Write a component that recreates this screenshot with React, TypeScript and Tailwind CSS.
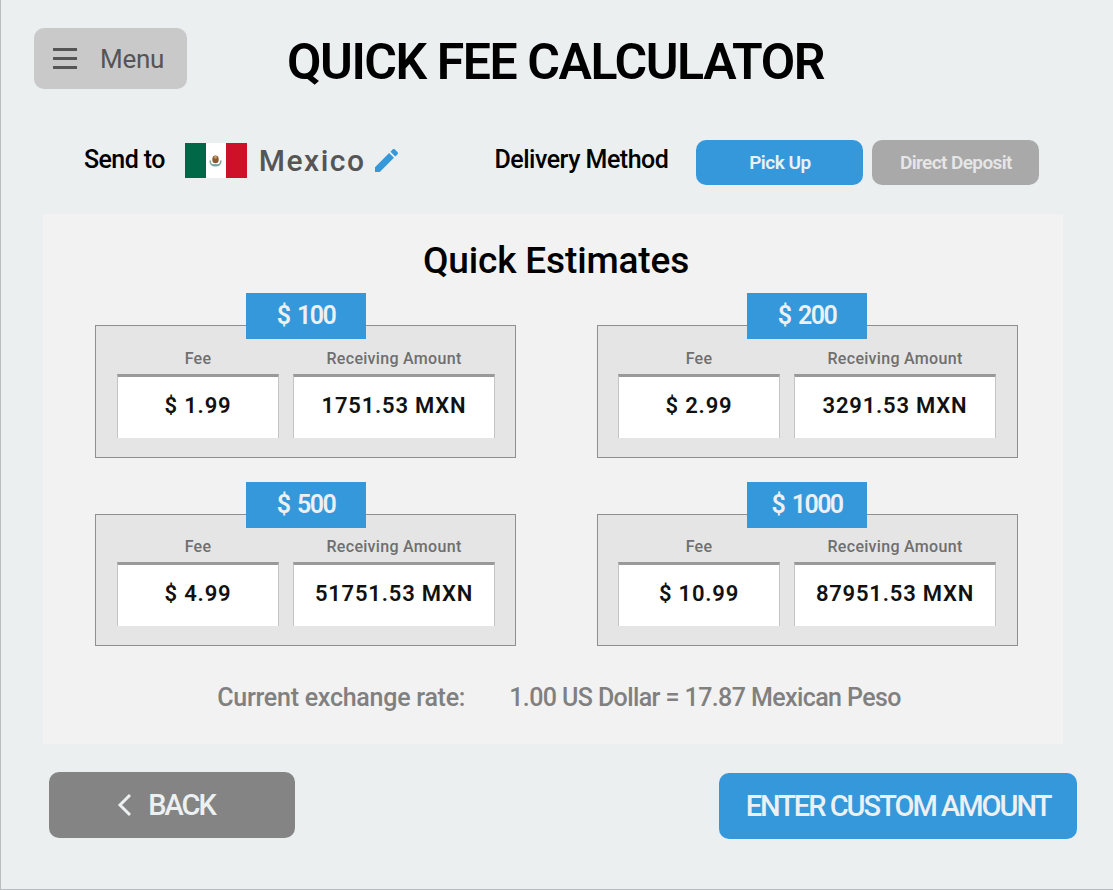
import React from 'react';

const estimates = [
  { amount: '$ 100', fee: '$ 1.99', receiving: '1751.53 MXN' },
  { amount: '$ 200', fee: '$ 2.99', receiving: '3291.53 MXN' },
  { amount: '$ 500', fee: '$ 4.99', receiving: '51751.53 MXN' },
  { amount: '$ 1000', fee: '$ 10.99', receiving: '87951.53 MXN' },
];

function MexicoFlag() {
  return (
    <div className="flex h-[35px] w-[62px] shrink-0">
      <div className="w-[21px] bg-[#006847]" />
      <div className="flex w-[20px] items-center justify-center bg-white">
        <svg width="15" height="15" viewBox="0 0 14 14">
          <path d="M2 7c0 3 2 5 5 5s5-2 5-5" fill="none" stroke="#7fa88f" strokeWidth="1.4" />
          <ellipse cx="7" cy="6" rx="3" ry="3.6" fill="#8a5a35" />
          <circle cx="7" cy="4" r="1.3" fill="#c9a15f" />
          <path d="M4 11h6" stroke="#6fa3b5" strokeWidth="1.2" />
        </svg>
      </div>
      <div className="w-[21px] bg-[#ce1126]" />
    </div>
  );
}

function EstimateCard({ amount, fee, receiving }: (typeof estimates)[number]) {
  return (
    <div className="group relative h-[133px] border border-[#8f8f8f] bg-[#e5e5e5] pl-[21px] pr-[20px] pt-[21px] even:pl-[20px] [&:nth-child(n+3)]:h-[132px] [&:nth-child(n+3)]:pt-[20px]">
      <div className="absolute left-[150px] top-[-33px] flex h-[46px] w-[120px] items-center justify-center bg-[#3498db] text-[25px] font-semibold tracking-[-1.6px] text-[#ecf0f1] [word-spacing:3px] group-even:left-[149px]">
        {amount}
      </div>
      <div className="flex gap-[14px]">
        <ValueBox label="Fee" value={fee} width="w-[162px]" />
        <ValueBox label="Receiving Amount" value={receiving} width="w-[202px]" />
      </div>
    </div>
  );
}

function ValueBox({ label, value, width }: { label: string; value: string; width: string }) {
  return (
    <div className={`${width} shrink-0`}>
      <div className="h-[27px] text-center text-[16px] font-medium leading-[24px] tracking-[0.3px] text-[#6f6f6f]">{label}</div>
      <div className="flex h-[64px] items-start justify-center border-x border-t-[3px] border-x-[#c4c4c4] border-t-[#999999] bg-white pt-[14px] text-[22px] font-semibold leading-[30px] tracking-[0.8px] text-[#111111]">
        {value}
      </div>
    </div>
  );
}

export default function App() {
  return (
    <div className="flex h-[890px] w-[1113px] flex-col overflow-hidden border-b border-l border-[#b9bdbf] bg-[#ebeff0] font-['Roboto',sans-serif]">
      {/* Header */}
      <div className="flex h-[89px] items-end pl-[33px]">
        <button className="flex h-[61px] w-[153px] items-center rounded-[10px] bg-[#c9c9c9] pl-[19px] text-[26px] text-[#555555]">
          <span className="flex w-[24px] flex-col gap-[6px]">
            <span className="h-[3px] bg-[#555555]" />
            <span className="h-[3px] bg-[#555555]" />
            <span className="h-[3px] bg-[#555555]" />
          </span>
          <span className="ml-[23px] mt-[2px] font-normal tracking-[-0.3px]">Menu</span>
        </button>
        <h1 className="mb-[-8px] ml-[100px] h-[70px] whitespace-nowrap text-[50px] font-semibold leading-[70px] tracking-[-1.45px] text-black">
          QUICK FEE CALCULATOR
        </h1>
      </div>

      {/* Destination and delivery */}
      <div className="mt-[51px] flex h-[45px] items-center pl-[83px]">
        <div className="mb-[5px] flex items-center">
          <span className="text-[25px] font-medium tracking-[-0.6px] text-black">Send to</span>
          <div className="ml-[20px]">
            <MexicoFlag />
          </div>
          <span className="ml-[12px] text-[30px] font-medium tracking-[1.5px] text-[#555555]">Mexico</span>
          <svg width="23" height="23" viewBox="3 3 18 18" className="ml-[9px] fill-[#3498db]">
            <path d="M3 17.25V21h3.75L17.81 9.94l-3.75-3.75L3 17.25zM20.71 7.04c.39-.39.39-1.02 0-1.41l-2.34-2.34c-.39-.39-1.02-.39-1.41 0l-1.83 1.83 3.75 3.75 1.83-1.83z" />
          </svg>
          <span className="ml-[97px] text-[25px] font-medium tracking-[-0.5px] text-black">Delivery Method</span>
        </div>
        <button className="ml-[28px] h-[45px] w-[167px] rounded-[10px] bg-[#3498db] pt-[2px] text-[19px] font-semibold tracking-[-0.5px] text-[#ecf0f1]">
          Pick Up
        </button>
        <button className="ml-[9px] h-[45px] w-[167px] rounded-[10px] bg-[#a9a9a9] pt-[2px] text-[19px] font-semibold tracking-[-0.6px] text-[#e6e6e6]">
          Direct Deposit
        </button>
      </div>

      {/* Estimates panel */}
      <div className="ml-[42px] mt-[29px] h-[530px] w-[1020px] bg-[#f2f2f2] px-[52px] pt-[22px]">
        <h2 className="h-[89px] pl-[6px] text-center text-[37px] font-medium leading-[50px] tracking-[-0.15px] text-black">Quick Estimates</h2>
        <div className="grid grid-cols-[421px_421px] gap-x-[81px] gap-y-[56px]">
          {estimates.map((e) => (
            <EstimateCard key={e.amount} {...e} />
          ))}
        </div>
        <div className="mt-[36px] flex justify-center pl-[12px] text-[25px] font-medium leading-[32px] text-[#808080]">
          <span className="tracking-[-0.25px]">Current exchange rate:</span>
          <span className="ml-[44px] tracking-[-0.6px]">1.00 US Dollar = 17.87 Mexican Peso</span>
        </div>
      </div>

      {/* Actions */}
      <div className="mt-[28px] flex items-start justify-between pl-[48px] pr-[36px]">
        <button className="flex h-[66px] w-[246px] items-center justify-center rounded-[10px] bg-[#848484] pr-[12px] text-[29px] font-medium tracking-[-2px] text-[#ecf0f1]">
          <svg width="16" height="24" viewBox="0 0 16 24" fill="none" className="mr-[15px]">
            <path d="M13 2 3 12l10 10" stroke="#ecf0f1" strokeWidth="3" />
          </svg>
          <span className="pt-[2px]">BACK</span>
        </button>
        <button className="mt-[1px] h-[66px] w-[358px] rounded-[10px] bg-[#3498db] pt-[2px] text-[29px] font-medium tracking-[-2px] text-[#ecf0f1]">
          ENTER CUSTOM AMOUNT
        </button>
      </div>
    </div>
  );
}
